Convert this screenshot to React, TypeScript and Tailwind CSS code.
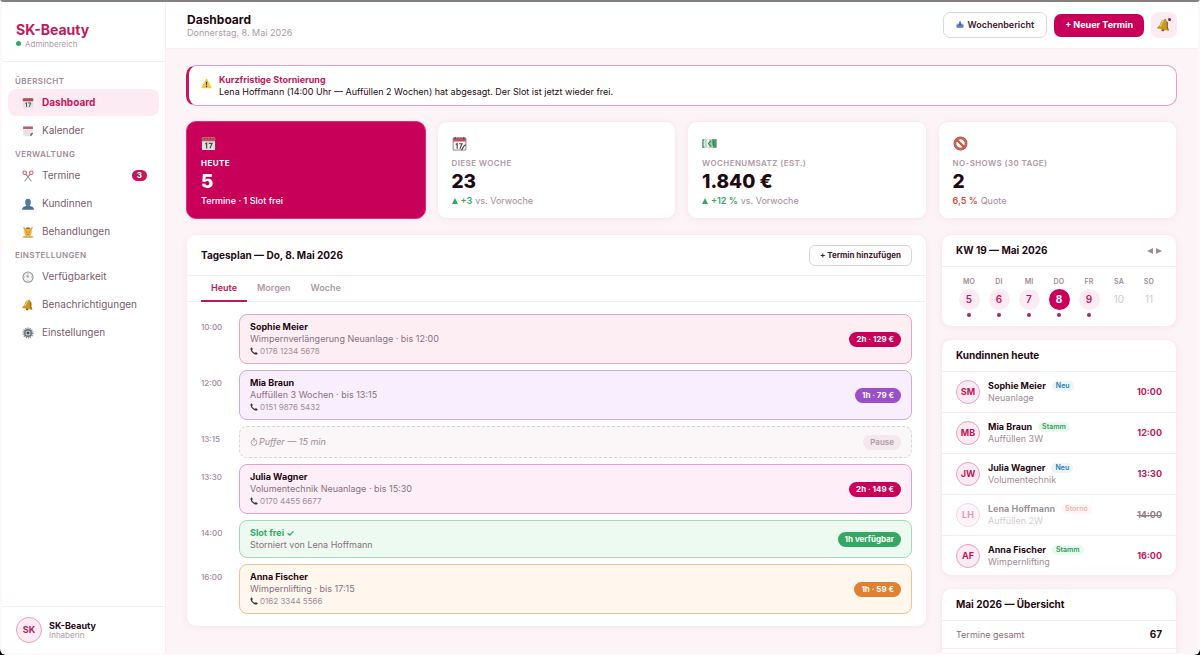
import { useState } from 'react';
import type { ReactNode } from 'react';
import clsx from 'clsx';

type IconName =
  | 'calendar'
  | 'notepad'
  | 'spiral'
  | 'scissors'
  | 'user'
  | 'massage'
  | 'clock'
  | 'bell'
  | 'gear'
  | 'inbox'
  | 'warning'
  | 'money'
  | 'prohibited'
  | 'phone'
  | 'stopwatch';

const drawings: Record<IconName, ReactNode> = {
  calendar: (
    <>
      <rect x="1" y="1.5" width="14" height="13.5" rx="1" fill="#e4e2e2" />
      <path d="M1 1.5h14v4H1z" fill="#b9545c" />
      <path d="M4 2v1.6M7 2v1.6M10 2v1.6M13 2v1.6" stroke="#7c3138" strokeWidth=".8" />
      <path d="M4.5 8.6 6 7.6v5.6M8.2 7.9h3.6l-2.2 5.3" fill="none" stroke="#4e4a4c" strokeWidth="1.3" />
    </>
  ),
  notepad: (
    <>
      <path d="M1.5 2h13v9.5L11 15H1.5z" fill="#e9e7e8" />
      <path d="M1.5 2h13v3.2h-13z" fill="#b9606a" />
      <path d="M14.5 10.5c-1.8 0-3 .2-3.2 1.2-.2 1 .2 2-.8 3.3 2.2-.3 4-2.2 4-4.5z" fill="#66666c" />
      <path d="M2 8h12M2 11h9M5 5v10M8 5v10" stroke="#dddadc" strokeWidth=".6" />
    </>
  ),
  spiral: (
    <>
      <path d="M1.2 2h13.6v13H1.2z" fill="#f6f3f4" stroke="#77676c" strokeWidth=".8" />
      <path d="M1.2 2h13.6v3.8H1.2z" fill="#ba5565" />
      <path d="M3.5 1v2.4M12.5 1v2.4M6.5 1.5v1M9.5 1.5v1" stroke="#54363d" strokeWidth="1" />
      <path
        d="M4 9l1.5-1v5.5M7.5 8.3h3.2l-2.2 5.2M14.8 9.5c-2.5.2-2.5 2.8-4.8 5.5"
        fill="none"
        stroke="#57484d"
        strokeWidth="1.2"
      />
    </>
  ),
  scissors: (
    <g fill="none" strokeWidth="1.4">
      <circle cx="3.6" cy="3.6" r="2.3" stroke="#c9626a" />
      <circle cx="12.4" cy="3.6" r="2.3" stroke="#c9626a" />
      <path d="M4.8 5.500 8 9l3.200-3.500" stroke="#c9626a" />
      <path d="m8 9 4.500 6M8 9l-4.500 6" stroke="#9a9298" />
    </g>
  ),
  user: (
    <>
      <path d="M0 15.5c.3-3.5 2.5-4.2 5.5-4.8h5c3 .6 5.2 1.3 5.5 4.8z" fill="#4b6f94" />
      <path
        d="M8 1c2.5 0 3.8 1.6 3.8 4.2 0 3.2-1.6 5.5-1.6 5.5L8 12.5l-2.2-1.8S4.2 8.4 4.2 5.2C4.2 2.6 5.5 1 8 1z"
        fill="#567b9f"
      />
    </>
  ),
  massage: (
    <>
      <path d="M2 15.5c0-3 2.5-4 6-4s6 1 6 4z" fill="#b8c7cf" />
      <circle cx="8" cy="8" r="5" fill="#f1b536" />
      <path d="M4.500 4.500C4.500 2.500 6 1.500 8 1.500s3.500 1 3.500 3C10 4 6 4 4.500 4.500z" fill="#a4713c" />
      <path
        d="m2.5 2 2.2 4.5M13.5 2l-2.2 4.5M1.5 14.500h13"
        stroke="#e9a62e"
        strokeWidth="1.800"
        strokeLinecap="round"
      />
      <path d="M5.5 8.2h1.4M9.1 8.2h1.4M6.5 10.8c.8.6 2.2.6 3 0" stroke="#7c4c17" strokeWidth=".8" fill="none" />
    </>
  ),
  clock: (
    <>
      <circle cx="8" cy="8.2" r="6.8" fill="#f4f4f6" stroke="#8d8d94" strokeWidth="1.4" />
      <path d="M8 3v1M8 12.4v1M2.8 8.2h1M12.2 8.2h1M8 8.2 5.3 6M8 8.2V4.7" stroke="#77777e" strokeWidth=".9" />
      <circle cx="8" cy="8.2" r=".8" fill="#d58c49" />
    </>
  ),
  bell: (
    <g transform="rotate(12 8 8)">
      <circle cx="8" cy="13.5" r="1.8" fill="#80571a" />
      <path
        d="M8 .8c1 0 1.3.5 1.3 1.3 2 .7 2.9 2.2 3.1 4.6.2 2.7.5 3.7 2.4 5.3.5.5.2 1.3-.6 1.3H1.800c-.8 0-1.1-.8-.6-1.300 1.900-1.600 2.200-2.600 2.400-5.300.2-2.400 1.100-3.900 3.100-4.600C6.700 1.300 7 .8 8 .8z"
        fill="#c99724"
      />
      <path d="M6.5 3.200C5 4.5 5 8 4.3 10.500" stroke="#f0d477" strokeWidth="1.3" fill="none" />
      <path d="M10.8 4c1.2 3 .4 5.500 2.700 8" stroke="#8b6118" strokeWidth="1.3" fill="none" />
    </g>
  ),
  gear: (
    <>
      <circle cx="8" cy="8" r="6.3" fill="none" stroke="#8b9097" strokeWidth="2.2" strokeDasharray="1.7 1.1" />
      <circle cx="8" cy="8" r="4.4" fill="#cdd1d6" stroke="#676d76" strokeWidth="1.8" />
      <circle cx="8" cy="8" r="1.8" fill="#4b5058" />
      <path d="M8 3.8v2.6M8 9.6v2.6M3.8 8h2.6M9.6 8h2.6" stroke="#676d76" strokeWidth=".9" />
    </>
  ),
  inbox: (
    <>
      <path d="M1 7h14v5.500c0 .6-.4 1-1 1H2c-.6 0-1-.4-1-1z" fill="#5a80ba" />
      <path d="M1 7h4l1 2h4l1-2h4l-2-2H3z" fill="#86a6d0" />
      <path d="M6.300 1h3.400v4.800h2.500L8 9.800 3.800 5.800h2.500z" fill="#3b65aa" />
    </>
  ),
  warning: (
    <>
      <path
        d="M7.2 1.6c.4-.7 1.3-.7 1.7 0l6.400 11.700c.4.7-.1 1.500-.9 1.500H1.700c-.8 0-1.300-.8-.9-1.500z"
        fill="#f3cb3e"
      />
      <path d="M7.1 5.300h1.900l-.4 5.200H7.500z" fill="#342b22" />
      <circle cx="8.05" cy="12.3" r="1" fill="#342b22" />
    </>
  ),
  money: (
    <>
      <path d="M.5 3.5h15v9H.5z" fill="#a5d0b4" />
      <path d="M.5 3.5h3v9h-3z" fill="#d9ebdf" />
      <path d="M5 3.5h2.5v9H5z" fill="#f0f7f2" />
      <path d="M10.5 3.5h5v9h-3.5z" fill="#4d9a6b" />
      <path
        d="M1 4v8h1.5M1 4h1.5M9.8 5.2 6.8 8l3 3M13.3 5.5c-2 .5-2 4.5 0 5"
        fill="none"
        stroke="#347a50"
        strokeWidth="1.1"
      />
    </>
  ),
  prohibited: (
    <g fill="none">
      <circle cx="8" cy="8" r="6" stroke="#a5493c" strokeWidth="2.8" />
      <circle cx="8" cy="8" r="6" stroke="#d66350" strokeWidth="1.8" />
      <path d="m4 4 8 8" stroke="#c7523f" strokeWidth="2.2" />
    </g>
  ),
  phone: (
    <path
      d="M1 3.2C1 2 2.400.6 3.400.8c.8.2 2.300 3 2.100 3.800-.2.7-1.400 1-1.300 1.700.3 1.700 3.700 5.100 5.400 5.400.7.1 1.100-1.100 1.800-1.300.8-.2 3.700 1.400 3.900 2.200.2 1-1.200 2.500-2.500 2.600C7.500 15.500.8 8.500 1 3.200z"
      fill="#40343b"
    />
  ),
  stopwatch: (
    <g fill="none" stroke="#a08c98" strokeWidth="1.5">
      <circle cx="8" cy="9" r="5.7" />
      <path d="M8 3.300V1M6 1h4M8 9V6M12.500 4.500l1-1" />
    </g>
  ),
};

const Icon = ({ name, className }: { name: IconName; className?: string }) => (
  <svg viewBox="0 0 16 16" aria-hidden="true" className={clsx('shrink-0', className)}>
    {drawings[name]}
  </svg>
);

const navSections: { title: string; items: { label: string; icon: IconName; count?: number }[] }[] = [
  {
    title: 'Übersicht',
    items: [
      { label: 'Dashboard', icon: 'calendar' },
      { label: 'Kalender', icon: 'notepad' },
    ],
  },
  {
    title: 'Verwaltung',
    items: [
      { label: 'Termine', icon: 'scissors', count: 3 },
      { label: 'Kundinnen', icon: 'user' },
      { label: 'Behandlungen', icon: 'massage' },
    ],
  },
  {
    title: 'Einstellungen',
    items: [
      { label: 'Verfügbarkeit', icon: 'clock' },
      { label: 'Benachrichtigungen', icon: 'bell' },
      { label: 'Einstellungen', icon: 'gear' },
    ],
  },
];

const stats: { icon: IconName; label: string; value: string; accent?: string; note: string; tone?: string }[] = [
  { icon: 'calendar', label: 'Heute', value: '5', note: 'Termine · 1 Slot frei' },
  { icon: 'spiral', label: 'Diese Woche', value: '23', accent: '+3', note: 'vs. Vorwoche', tone: 'up' },
  { icon: 'money', label: 'Wochenumsatz (est.)', value: '1.840 €', accent: '+12 %', note: 'vs. Vorwoche', tone: 'up' },
  { icon: 'prohibited', label: 'No-Shows (30 Tage)', value: '2', accent: '6,5 %', note: 'Quote', tone: 'down' },
];

const appointments = [
  {
    time: '10:00',
    name: 'Sophie Meier',
    detail: 'Wimpernverlängerung Neuanlage · bis 12:00',
    phone: '0176 1234 5678',
    tag: '2h · 129 €',
    box: 'border-[#e3a6c4] bg-[#fdeef4]',
    pill: 'bg-[#c8005a]',
  },
  {
    time: '12:00',
    name: 'Mia Braun',
    detail: 'Auffüllen 3 Wochen · bis 13:15',
    phone: '0151 9876 5432',
    tag: '1h · 79 €',
    box: 'border-[#cfaadd] bg-[#f9eefe]',
    pill: 'bg-[#9b4fc8]',
  },
  { time: '13:15', buffer: 'Puffer — 15 min', tag: 'Pause' },
  {
    time: '13:30',
    name: 'Julia Wagner',
    detail: 'Volumentechnik Neuanlage · bis 15:30',
    phone: '0170 4455 6677',
    tag: '2h · 149 €',
    box: 'border-[#e0a3cd] bg-[#feeef7]',
    pill: 'bg-[#c8005a]',
  },
  {
    time: '14:00',
    name: 'Slot frei ✓',
    detail: 'Storniert von Lena Hoffmann',
    tag: '1h verfügbar',
    free: true,
    box: 'border-[#a3d9b8] bg-[#edfaf2]',
    pill: 'bg-[#34a862]',
  },
  {
    time: '16:00',
    name: 'Anna Fischer',
    detail: 'Wimpernlifting · bis 17:15',
    phone: '0162 3344 5566',
    tag: '1h · 59 €',
    box: 'border-[#ebc591] bg-[#fff6ee]',
    pill: 'bg-[#e08030]',
  },
];

const week = [
  { day: 'Mo', date: 5, busy: true },
  { day: 'Di', date: 6, busy: true },
  { day: 'Mi', date: 7, busy: true },
  { day: 'Do', date: 8, busy: true },
  { day: 'Fr', date: 9, busy: true },
  { day: 'Sa', date: 10, busy: false },
  { day: 'So', date: 11, busy: false },
];

const clients = [
  { initials: 'SM', name: 'Sophie Meier', badge: 'Neu', service: 'Neuanlage', time: '10:00' },
  { initials: 'MB', name: 'Mia Braun', badge: 'Stamm', service: 'Auffüllen 3W', time: '12:00' },
  { initials: 'JW', name: 'Julia Wagner', badge: 'Neu', service: 'Volumentechnik', time: '13:30' },
  { initials: 'LH', name: 'Lena Hoffmann', badge: 'Storno', service: 'Auffüllen 2W', time: '14:00' },
  { initials: 'AF', name: 'Anna Fischer', badge: 'Stamm', service: 'Wimpernlifting', time: '16:00' },
];

const badgeStyles: Record<string, string> = {
  Neu: 'bg-[#e8f5fd] text-[#2f79ac]',
  Stamm: 'bg-[#e8faf0] text-[#2f9e5b]',
  Storno: 'bg-[#fdeeea] text-[#e0503c]',
};

const Avatar = ({ children, className }: { children: ReactNode; className: string }) => (
  <div
    className={clsx(
      'flex shrink-0 items-center justify-center rounded-full border border-[#e3a0c6] bg-[#fdebf3] font-bold text-[#c2185b]',
      className
    )}
  >
    {children}
  </div>
);

const Card = ({ title, action, children }: { title: string; action?: ReactNode; children: ReactNode }) => (
  <section className="overflow-hidden rounded-[10px] border border-[#faeaf1] bg-white shadow-[0_1px_6px_rgba(200,0,90,0.06)]">
    <div className="flex h-8 items-center justify-between border-b border-[#f5edf1] px-3.5">
      <h2 className="text-[10px] font-bold">{title}</h2>
      {action}
    </div>
    {children}
  </section>
);

const Sidebar = () => {
  const [active, setActive] = useState('Dashboard');

  return (
    <aside className="flex w-[164px] shrink-0 flex-col border-r border-[#f7edf2] bg-white">
      <div className="flex h-[60px] flex-col justify-center border-b border-[#f7edf2] px-3.5 pt-2">
        <div className="text-[14px] leading-4 font-bold text-[#c2185b]">SK-Beauty</div>
        <div className="flex items-center gap-1 text-[8px] leading-3 text-[#b09aa6]">
          <span className="size-[5px] rounded-full bg-[#34a862]" />
          Adminbereich
        </div>
      </div>

      <nav className="flex-1 px-1.5 pt-[9px]">
        {navSections.map((section) => (
          <div key={section.title}>
            <div className="px-[7px] pt-0.5 text-[8px] leading-4 font-semibold tracking-wider text-[#a08c98] uppercase">
              {section.title}
            </div>
            <div className="flex flex-col gap-px">
              {section.items.map((item) => (
                <button
                  key={item.label}
                  onClick={() => setActive(item.label)}
                  className={clsx(
                    'flex h-[27px] items-center gap-2 rounded-lg pr-3 pl-3.5 text-[10px]',
                    active === item.label ? 'bg-[#fdebf3] font-bold text-[#c2185b]' : 'text-[#7a5c6e]'
                  )}
                >
                  <Icon name={item.icon} className="size-3" />
                  {item.label}
                  {item.count && (
                    <span className="ml-auto rounded-full bg-[#c2185b] px-[5px] text-[8px] leading-[11px] font-bold text-white">
                      {item.count}
                    </span>
                  )}
                </button>
              ))}
            </div>
          </div>
        ))}
      </nav>

      <div className="flex h-[47px] items-center gap-[7px] border-t border-[#f7edf2] px-3.5">
        <Avatar className="size-[26px] text-[9px]">SK</Avatar>
        <div>
          <div className="text-[9px] leading-[11px] font-bold">SK-Beauty</div>
          <div className="text-[8px] leading-[9px] text-[#b09aa6]">Inhaberin</div>
        </div>
      </div>
    </aside>
  );
};

const Topbar = () => (
  <header className="flex h-[47px] shrink-0 items-center justify-between border-b border-[#f7edf2] bg-white px-[21px]">
    <div className="pt-px">
      <h1 className="text-[12px] leading-[14px] font-bold">Dashboard</h1>
      <p className="text-[9px] leading-3 text-[#b09aa6]">Donnerstag, 8. Mai 2026</p>
    </div>
    <div className="flex items-center gap-[7px]">
      <button className="flex h-[26px] items-center gap-[3px] rounded-[7px] border border-[#e2d7dc] px-3 text-[9px] font-semibold text-[#3d2030]">
        <Icon name="inbox" className="size-2" />
        Wochenbericht
      </button>
      <button className="h-[23px] rounded-[7px] bg-[#c8005a] px-[11px] text-[9px] font-bold text-white">
        + Neuer Termin
      </button>
      <button
        aria-label="Benachrichtigungen anzeigen"
        className="relative flex size-[26px] items-center justify-center rounded-[7px] bg-[#fdebf3]"
      >
        <Icon name="bell" className="size-3.5" />
        <span className="absolute top-1.5 right-1.5 size-[3px] rounded-full bg-[#a0184c]" />
      </button>
    </div>
  </header>
);

const StatCards = () => (
  <div className="mt-[15px] grid grid-cols-4 gap-[11px]">
    {stats.map((stat) => (
      <div
        key={stat.label}
        className={clsx(
          'flex h-[98px] flex-col rounded-[10px] border px-3.5 pt-3.5 shadow-[0_1px_6px_rgba(200,0,90,0.06)]',
          stat.tone ? 'border-[#faeaf1] bg-white' : 'border-[#d6337b] bg-[#c8005a] text-white'
        )}
      >
        <Icon name={stat.icon} className="size-[15px]" />
        <div
          className={clsx(
            'mt-1.5 text-[8px] leading-3 tracking-wider uppercase',
            stat.tone ? 'font-semibold text-[#b09aa6]' : 'font-bold text-white'
          )}
        >
          {stat.label}
        </div>
        <div className="text-[19px] leading-[26px] font-extrabold">{stat.value}</div>
        <div className="flex items-center gap-[3px] text-[9px] leading-3">
          {stat.tone === 'up' && (
            <svg viewBox="0 0 6 6" className="size-1.5" aria-hidden="true">
              <path d="M3 0 6 6H0z" fill="#34a862" />
            </svg>
          )}
          {stat.accent && (
            <span className={clsx('font-semibold', stat.tone === 'up' ? 'text-[#34a862]' : 'text-[#dc4f3c]')}>
              {stat.accent}
            </span>
          )}
          <span className={stat.tone ? 'text-[#a08c98]' : 'font-medium text-white'}>{stat.note}</span>
        </div>
      </div>
    ))}
  </div>
);

const Schedule = () => {
  const [tab, setTab] = useState('Heute');

  return (
    <section className="min-w-0 flex-1 overflow-hidden rounded-[10px] border border-[#faeaf1] bg-white shadow-[0_1px_6px_rgba(200,0,90,0.06)]">
      <div className="flex h-[41px] items-center justify-between border-b border-[#f5edf1] px-3.5">
        <h2 className="text-[10px] font-bold">Tagesplan — Do, 8. Mai 2026</h2>
        <button className="h-[21px] rounded-md border border-[#ddd2d8] px-2.5 text-[8px] font-bold text-[#3d2030]">
          + Termin hinzufügen
        </button>
      </div>

      <div className="flex h-[26px] border-b border-[#f5edf1] px-3.5">
        {['Heute', 'Morgen', 'Woche'].map((label) => (
          <button
            key={label}
            onClick={() => setTab(label)}
            className={clsx(
              '-mb-px border-b-2 px-2.5 text-[9px] font-semibold',
              tab === label ? 'border-[#c2185b] text-[#c2185b]' : 'border-transparent text-[#b09aa6]'
            )}
          >
            {label}
          </button>
        ))}
      </div>

      <div className="flex flex-col gap-1.5 px-3.5 py-3">
        {appointments.map((item) => (
          <div key={item.time} className="flex">
            <div className="w-[38px] shrink-0 pt-[7px] text-[8px] leading-3 font-medium text-[#a08c98]">{item.time}</div>
            {item.buffer ? (
              <div className="flex h-8 flex-1 items-center justify-between rounded-lg border border-dashed border-[#ddd2d8] bg-[#fbf6f8] px-2.5">
                <span className="flex items-center gap-px text-[9px] text-[#a08c98] italic">
                  <Icon name="stopwatch" className="size-2" />
                  {item.buffer}
                </span>
                <span className="rounded-full bg-[#f2e8ed] px-[7px] text-[8px] leading-[15px] font-semibold text-[#b09aa6]">
                  {item.tag}
                </span>
              </div>
            ) : (
              <div className={clsx('flex flex-1 items-center justify-between rounded-lg border px-2.5 py-1.5', item.box)}>
                <div>
                  <div className={clsx('text-[9px] leading-3 font-bold', item.free && 'text-[#34a862]')}>{item.name}</div>
                  <div className="text-[9px] leading-3 text-[#8a7080]">{item.detail}</div>
                  {item.phone && (
                    <div className="flex items-center gap-0.5 text-[8px] leading-3 text-[#a08c98]">
                      <Icon name="phone" className="size-2" />
                      {item.phone}
                    </div>
                  )}
                </div>
                <span className={clsx('rounded-full px-[7px] text-[8px] leading-[15px] font-bold text-white', item.pill)}>
                  {item.tag}
                </span>
              </div>
            )}
          </div>
        ))}
      </div>
    </section>
  );
};

const WeekCard = () => (
  <Card
    title="KW 19 — Mai 2026"
    action={
      <div className="flex gap-[3px] text-[#a08c98]">
        <button aria-label="Vorherige Woche">
          <svg viewBox="0 0 6 6" className="size-1.5">
            <path d="M6 0v6L0 3z" fill="currentColor" />
          </svg>
        </button>
        <button aria-label="Nächste Woche">
          <svg viewBox="0 0 6 6" className="size-1.5">
            <path d="M0 0v6l6-3z" fill="currentColor" />
          </svg>
        </button>
      </div>
    }
  >
    <div className="grid grid-cols-7 px-3 pt-[9px] pb-[9px]">
      {week.map(({ day, date, busy }) => (
        <div key={day} className="flex flex-col items-center">
          <div className="text-[7px] leading-3 font-semibold tracking-wide text-[#a08c98] uppercase">{day}</div>
          <div
            className={clsx(
              'mt-px flex size-[21px] items-center justify-center rounded-full text-[10px]',
              !busy && 'text-[#d2c8cd]',
              busy && date !== 8 && 'bg-[#fdebf3] font-semibold text-[#c2185b]',
              date === 8 && 'bg-[#c8005a] font-bold text-white'
            )}
          >
            {date}
          </div>
          {busy && <span className="mt-[3px] size-1 rounded-full bg-[#a8285c]" />}
        </div>
      ))}
    </div>
  </Card>
);

const ClientsCard = () => (
  <Card title="Kundinnen heute">
    <ul className="divide-y divide-[#f5edf1]">
      {clients.map((client) => {
        const cancelled = client.badge === 'Storno';
        return (
          <li key={client.name} className="flex h-[41px] items-center gap-2 px-3.5 last:h-[39px]">
            <div className={clsx('flex items-center gap-2', cancelled && 'opacity-45')}>
              <Avatar className="size-6 text-[9px]">{client.initials}</Avatar>
              <div>
                <div className="flex items-center gap-1.5 text-[9px] leading-3 font-bold">
                  {client.name}
                  <span
                    className={clsx('rounded-full px-1 text-[7px] leading-[10px] font-semibold', badgeStyles[client.badge])}
                  >
                    {client.badge}
                  </span>
                </div>
                <div className="text-[9px] leading-3 text-[#a08c98]">{client.service}</div>
              </div>
            </div>
            <span
              className={clsx('ml-auto text-[9px] font-bold', cancelled ? 'text-[#8f8088] line-through' : 'text-[#c2185b]')}
            >
              {client.time}
            </span>
          </li>
        );
      })}
    </ul>
  </Card>
);

export default function App() {
  return (
    <div className="h-screen bg-black font-[Inter,sans-serif] text-[#1f0a14]">
      <div className="flex h-full overflow-hidden rounded-b-md border-x-2 border-t-2 border-b-2 border-x-[#fdf9fb] border-t-[#857f82] border-b-[#fdf9fb] bg-[#fdf4f8]">
        <Sidebar />
        <div className="flex min-w-0 flex-1 flex-col">
          <Topbar />
          <main className="min-h-0 flex-1 overflow-hidden pt-4 pr-[21px] pl-5">
            <div
              role="alert"
              className="flex h-[41px] items-center gap-[7px] rounded-[10px] border border-l-3 border-[#dfa0c9] border-l-[#c2185b] bg-white px-3"
            >
              <Icon name="warning" className="mb-1 size-[11px]" />
              <div>
                <div className="text-[9px] leading-3 font-bold text-[#c2185b]">Kurzfristige Stornierung</div>
                <p className="text-[9px] leading-3">
                  Lena Hoffmann (14:00 Uhr — Auffüllen 2 Wochen) hat abgesagt. Der Slot ist jetzt wieder frei.
                </p>
              </div>
            </div>

            <StatCards />

            <div className="mt-[15px] flex items-start gap-3.5">
              <Schedule />
              <div className="flex w-[236px] shrink-0 flex-col gap-3">
                <WeekCard />
                <ClientsCard />
                <Card title="Mai 2026 — Übersicht">
                  <dl className="pb-6">
                    <div className="flex h-7 items-center justify-between border-b border-[#f5edf1] px-3.5">
                      <dt className="text-[9px] text-[#8a7080]">Termine gesamt</dt>
                      <dd className="text-[10px] font-bold">67</dd>
                    </div>
                  </dl>
                </Card>
              </div>
            </div>
          </main>
        </div>
      </div>
    </div>
  );
}
